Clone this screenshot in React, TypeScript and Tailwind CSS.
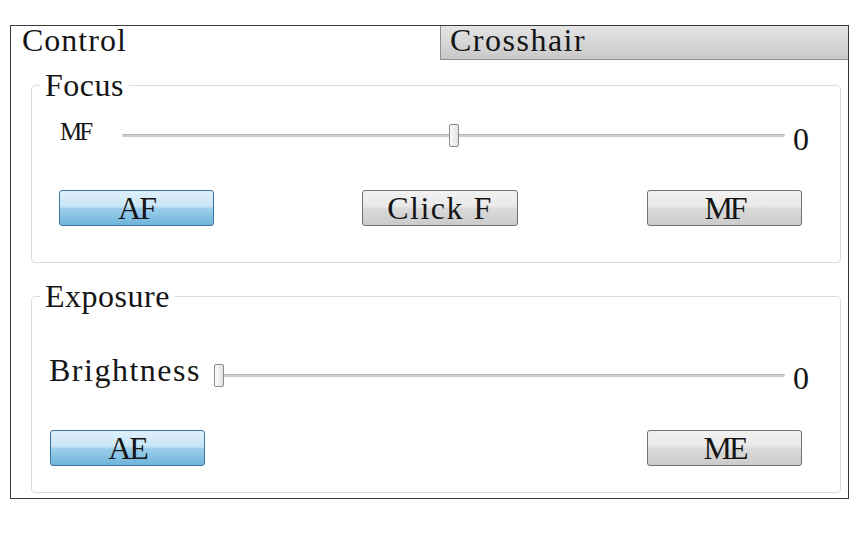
import React from "react";

const font = "font-['Liberation_Serif',serif] text-[#151515]";

function Slider({ value, widthClass }: { value: number; widthClass: string }) {
  const ref = React.useRef<HTMLDivElement>(null);
  const [w, setW] = React.useState(0);
  React.useLayoutEffect(() => {
    if (ref.current) setW(ref.current.offsetWidth);
  }, []);
  return (
    <div ref={ref} className={`relative h-[24px] shrink-0 ${widthClass}`}>
      <div className="absolute left-0 right-0 top-[10px] h-[3px] rounded-full bg-[#cdcdcd] border-t border-[#b5b5b5]" />
      <div
        className="absolute top-0 h-[23px] w-[10px] rounded-[2px] border border-[#8a8a8a] bg-[linear-gradient(to_right,#fbfbfb,#e2e2e2)]"
        style={{ left: value * Math.max(0, w - 10) }}
      />
    </div>
  );
}

function Btn({ label, blue, className = "" }: { label: string; blue?: boolean; className?: string }) {
  return (
    <div
      className={`flex h-[36px] shrink-0 items-center justify-center rounded-[3px] border ${
        blue
          ? "border-[#3b74a0] bg-[linear-gradient(to_bottom,#dff0fa_0%,#c7e5f5_45%,#9ccfeb_52%,#6fb4db_100%)]"
          : "border-[#707070] bg-[linear-gradient(to_bottom,#f2f2f2_0%,#e9e9e9_45%,#dadada_52%,#cbcbcb_100%)]"
      } ${className}`}
    >
      <span className={`${font} text-[32px] leading-[28px] tracking-[0.5px]`}>{label}</span>
    </div>
  );
}

export default function App() {
  return (
    <div className="h-[538px] w-[860px] bg-white pl-[10px] pt-[25px]">
      <div className="flex h-[474px] w-[839px] flex-col border border-[#3a3a3a] bg-white">
        {/* tabs */}
        <div className="flex h-[34px] shrink-0">
          <div className="w-[429px] pl-[11px]">
            <span className={`${font} text-[32px] leading-[28px] tracking-[1px]`}>Control</span>
          </div>
          <div className="flex-1 border-b border-l border-[#8e8e8e] bg-[linear-gradient(to_bottom,#e4e4e4,#c9c9c9)] pl-[9px]">
            <span className={`${font} text-[32px] leading-[28px] tracking-[1.5px]`}>Crosshair</span>
          </div>
        </div>

        {/* Focus */}
        <fieldset className="ml-[20px] mt-[11px] h-[192px] w-[810px] shrink-0 rounded-[4px] border border-[#d3dde3]">
          <legend className={`ml-[8px] px-[5px] ${font} text-[32px] leading-[28px] tracking-[0.5px]`}>Focus</legend>
          <div className="mt-[25px] flex items-start pl-[28px]">
            <span className={`${font} mt-[-4px] w-[62px] shrink-0 text-[25px] leading-[24px] tracking-[-3px]`}>MF</span>
            <Slider value={0.5} widthClass="w-[663px]" />
            <span className={`${font} ml-[8px] mt-[1px] text-[32px] leading-[28px]`}>0</span>
          </div>
          <div className="mt-[37px] flex pl-[27px]">
            <Btn label="AF" blue className="w-[155px] [&>span]:tracking-[-2px]" />
            <Btn label="Click F" className="ml-[148px] w-[156px] [&>span]:tracking-[1.5px]" />
            <Btn label="MF" className="ml-[129px] w-[155px] [&>span]:tracking-[-3px]" />
          </div>
        </fieldset>

        {/* Exposure */}
        <fieldset className="ml-[20px] mt-[19px] h-[211px] w-[810px] shrink-0 rounded-[4px] border border-[#d3dde3]">
          <legend className={`ml-[8px] px-[5px] ${font} text-[32px] leading-[28px] tracking-[0.5px]`}>Exposure</legend>
          <div className="mt-[54px] flex items-start pl-[17px]">
            <span className={`${font} mt-[-8px] w-[165px] shrink-0 whitespace-nowrap text-[32px] leading-[28px] tracking-[1.5px]`}>
              Brightness
            </span>
            <Slider value={0} widthClass="w-[571px]" />
            <span className={`${font} ml-[8px] mt-[0px] text-[32px] leading-[28px]`}>0</span>
          </div>
          <div className="mt-[38px] flex pl-[18px]">
            <Btn label="AE" blue className="w-[155px] [&>span]:tracking-[-2px]" />
            <Btn label="ME" className="ml-[442px] w-[155px] [&>span]:tracking-[-3px]" />
          </div>
        </fieldset>
      </div>
    </div>
  );
}
